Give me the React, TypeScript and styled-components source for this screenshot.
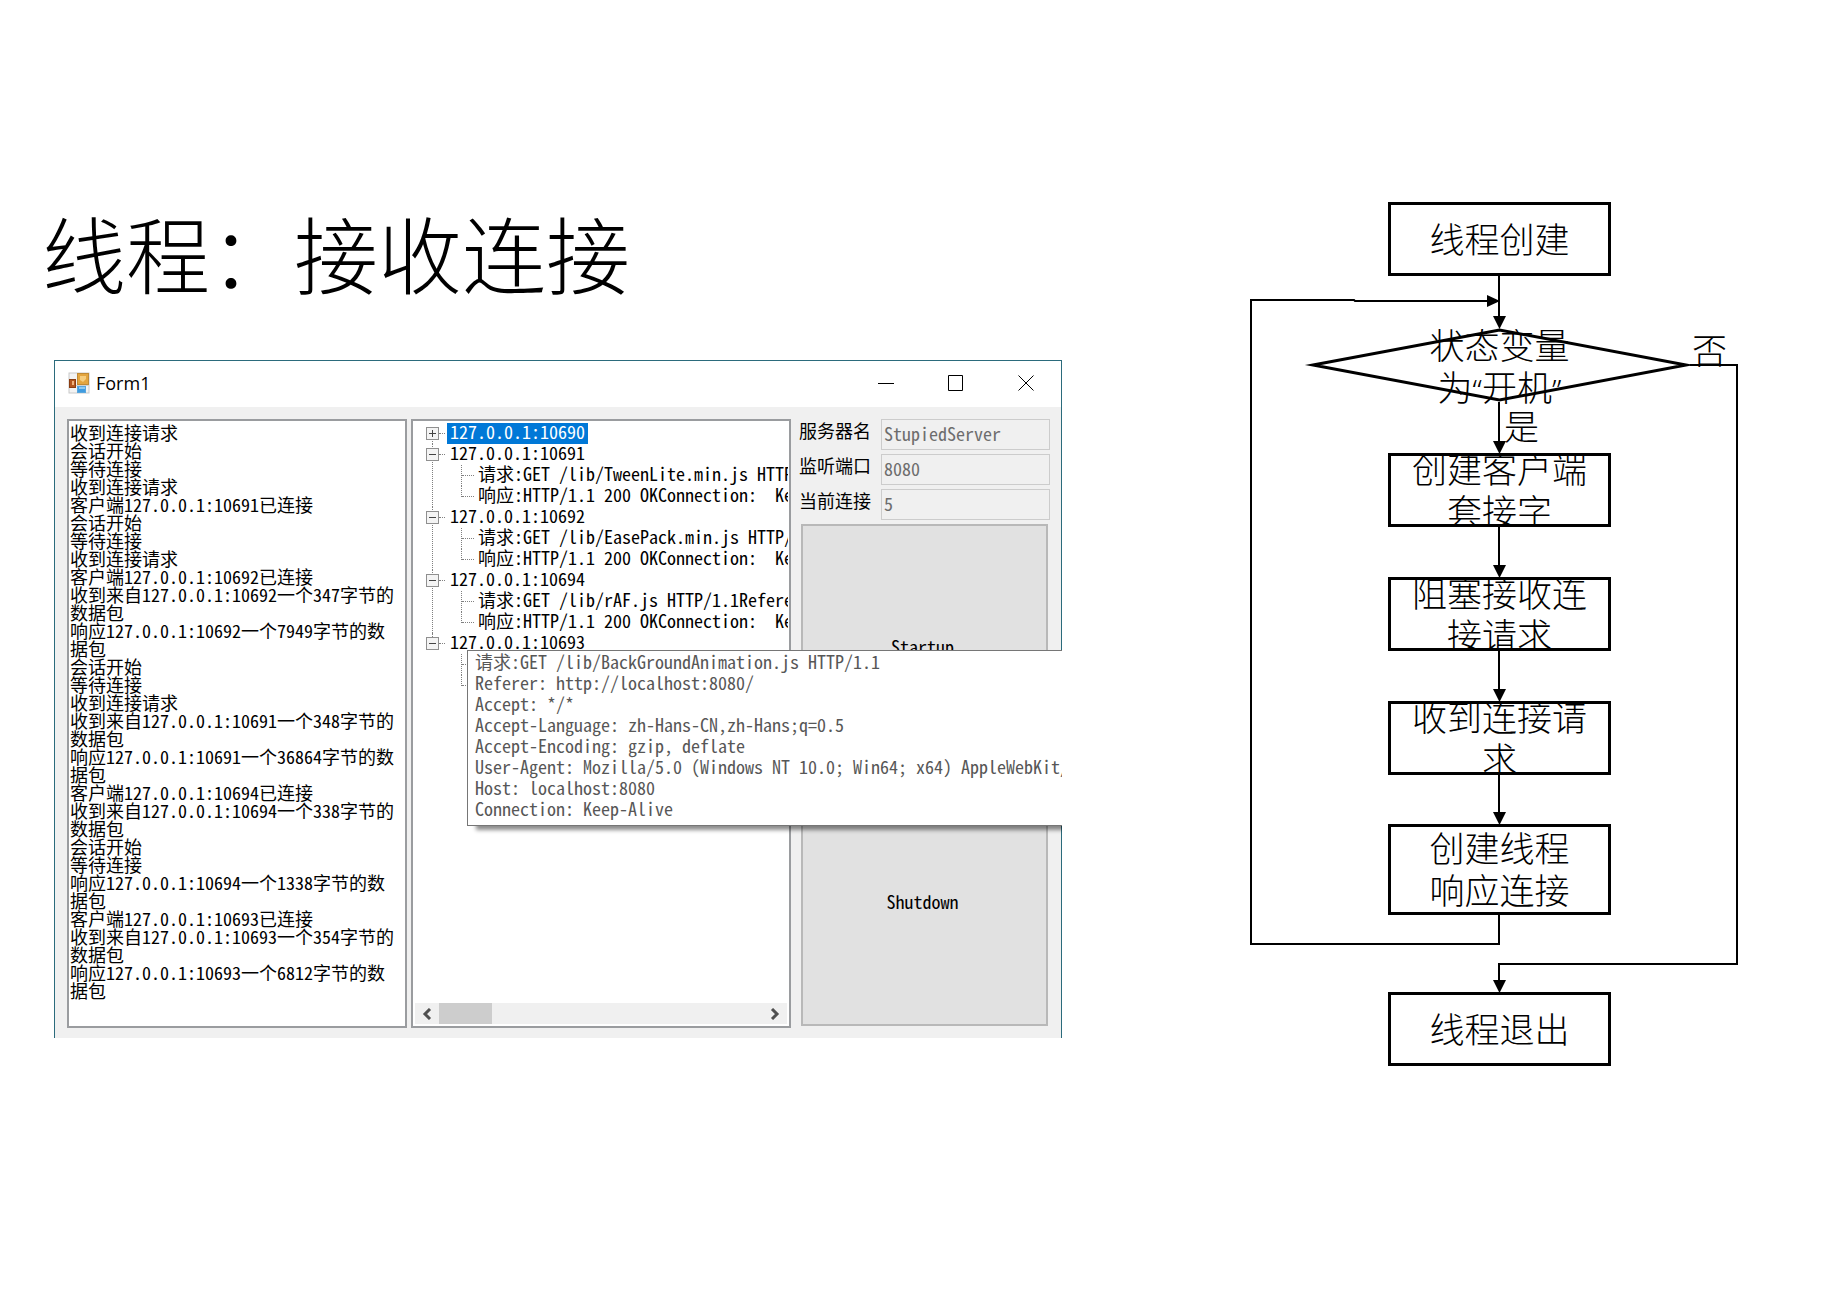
import React from "react";
import styled, { createGlobalStyle } from "styled-components";

const GlobalStyle = createGlobalStyle`
  *, *::before, *::after { box-sizing: border-box; }
  body {
    margin: 0;
    background: #fff;
    color: #000;
    font-family: "Noto Sans CJK SC", "Open Sans", sans-serif;
  }
  h1, p, ul { margin: 0; padding: 0; }
  ul { list-style: none; }
`;

/* ---------- slide ---------- */

const Slide = styled.main`
  display: grid;
  grid-template-columns: minmax(0, 1fr) 488px;
  gap: 188px;
  align-items: start;
  min-height: 100vh;
  padding: 202px 98px 0 42px;
`;

const Title = styled.h1`
  padding-bottom: 58px;
  font-size: 84px;
  font-weight: 200;
  line-height: 100px;
  white-space: nowrap;
`;

/* ---------- form window ---------- */

const Form = styled.section`
  margin-left: 12px;
  border: 1px solid #2b6b7c;
  border-bottom: 0;
  background: #f0f0f0;
  font-family: "Noto Sans Mono CJK SC", "Noto Sans CJK SC", monospace;
  font-size: 18px;
`;

const TitleBar = styled.header`
  display: flex;
  align-items: center;
  height: 46px;
  padding: 0 0 2px 13px;
  background: #fff;
`;

const Caption = styled.span`
  flex: 1;
  padding-left: 6px;
  font-family: "Open Sans", sans-serif;
  font-size: 18px;
  line-height: 24px;
`;

const CaptionButton = styled.button`
  display: grid;
  place-items: center;
  width: 70px;
  height: 44px;
  padding: 0;
  border: 0;
  background: none;
`;

const Body = styled.div`
  position: relative;
  display: grid;
  grid-template-columns: minmax(0, 340fr) minmax(0, 380fr) minmax(0, 255fr);
  gap: 4px;
  padding: 12px 11px 10px 12px;
`;

const Pane = styled.div`
  display: flex;
  flex-direction: column;
  min-height: 609px;
  border: 2px solid #9a9c9f;
  background: #fff;
  overflow: hidden;
`;

const Log = styled(Pane)`
  padding: 2px 6px 0 1px;
  line-height: 18px;
  word-break: break-all;
`;

/* ---------- tree ---------- */

const TreeList = styled.ul`
  flex: 1;
  padding-top: 2px;
  margin-right: 1px;
  line-height: 17px;
  white-space: pre;
  overflow: hidden;
`;

const Branch = styled.li`
  position: relative;
  &::before {
    content: "";
    position: absolute;
    left: 19px;
    top: 0;
    bottom: 0;
    border-left: 1px dotted #808080;
  }
  &:first-child::before { top: 10px; }
  &:last-child::before { bottom: auto; height: 10px; }
`;

const BranchRow = styled.div`
  display: flex;
  align-items: center;
  height: 21px;
  padding-left: 13px;
`;

const Expander = styled.button`
  position: relative;
  display: grid;
  place-items: center;
  width: 13px;
  height: 13px;
  padding: 0;
  border: 1px solid #8f8f8f;
  background: #f4f4f4;
`;

const Stub = styled.span`
  width: 6px;
  margin-right: 2px;
  border-top: 1px dotted #808080;
`;

const NodeLabel = styled.span<{ $selected?: boolean }>`
  height: 21px;
  padding: 0 3px;
  background: ${(p) => (p.$selected ? "#0078d7" : "transparent")};
  color: ${(p) => (p.$selected ? "#fff" : "#000")};
`;

const Leaf = styled.li`
  display: flex;
  height: 21px;
  padding-left: 48px;
`;

const Elbow = styled.span<{ $last: boolean }>`
  flex: none;
  width: 13px;
  height: ${(p) => (p.$last ? 11 : 21)}px;
  margin-right: 4px;
  border-left: 1px dotted #808080;
  &::before {
    content: "";
    display: block;
    height: 11px;
    border-bottom: 1px dotted #808080;
  }
`;

const ScrollBar = styled.div`
  display: flex;
  align-items: stretch;
  height: 21px;
  margin: 0 2px 2px;
  background: #f0f0f0;
`;

const ScrollButton = styled.button`
  display: grid;
  place-items: center;
  width: 24px;
  padding: 0;
  border: 0;
  background: none;
`;

const Track = styled.div`
  flex: 1;
`;

const Thumb = styled.div`
  width: 53px;
  height: 21px;
  background: #cdcdcd;
`;

/* ---------- settings column ---------- */

const Side = styled.div`
  display: flex;
  flex-direction: column;
  gap: 4px;
  padding-left: 4px;
`;

const Field = styled.div`
  display: grid;
  grid-template-columns: 82px minmax(0, 1fr);
  height: 31px;
`;

const FieldLabel = styled.label`
  line-height: 22px;
`;

const FieldInput = styled.input`
  width: 100%;
  min-width: 0;
  height: 31px;
  padding: 0 2px 4px;
  border: 1px solid #cccccc;
  border-radius: 0;
  background: #f0f0f0;
  color: #6d6d6d;
  font: inherit;
  line-height: 22px;
`;

const Actions = styled.div`
  display: flex;
  flex: 1;
  flex-direction: column;
  gap: 8px;
  padding: 0 2px;
  margin-bottom: 2px;
`;

const ActionButton = styled.button`
  flex: 1;
  padding: 0 4px 4px 0;
  border: 2px solid #b8b8b8;
  background: #e1e1e1;
  color: #000;
  font: inherit;
`;

const Tip = styled.div`
  position: absolute;
  top: 243px;
  left: 412px;
  right: -1px;
  padding: 0 0 6px 7px;
  border: 1px solid #767676;
  border-right: 0;
  background: #fff;
  color: #575757;
  line-height: 21px;
  white-space: pre;
  clip-path: inset(0 0 -12px 0);
  box-shadow: 8px 5px 4px -1px rgba(0, 0, 0, 0.45);
`;

/* ---------- flowchart ---------- */

const Chart = styled.section`
  position: relative;
  height: 864px;
  font-family: "Noto Sans CJK SC", sans-serif;
  font-size: 35px;
  font-weight: 300;
  line-height: 42px;
  text-align: center;
  white-space: pre;
`;

const Lines = styled.svg`
  position: absolute;
  inset: 0;
  overflow: visible;
`;

const Step = styled.div<{ $top: number; $height?: number; $plain?: boolean }>`
  position: absolute;
  top: ${(p) => p.$top}px;
  left: 138px;
  display: flex;
  align-items: center;
  justify-content: center;
  width: 223px;
  height: ${(p) => p.$height ?? 74}px;
  padding-bottom: 3px;
  border: ${(p) => (p.$plain ? "0" : "3px solid #000")};
  overflow: ${(p) => (p.$plain ? "visible" : "hidden")};
`;

const Quote = styled.span`
  font-family: "Noto Sans", sans-serif;
  font-size: 30px;
  line-height: 0;
`;

const Answer = styled.span<{ $left: number; $top: number }>`
  position: absolute;
  left: ${(p) => p.$left}px;
  top: ${(p) => p.$top}px;
`;

/* ---------- content ---------- */

const log = [
  "收到连接请求",
  "会话开始",
  "等待连接",
  "收到连接请求",
  "客户端127.0.0.1:10691已连接",
  "会话开始",
  "等待连接",
  "收到连接请求",
  "客户端127.0.0.1:10692已连接",
  "收到来自127.0.0.1:10692一个347字节的数据包",
  "响应127.0.0.1:10692一个7949字节的数据包",
  "会话开始",
  "等待连接",
  "收到连接请求",
  "收到来自127.0.0.1:10691一个348字节的数据包",
  "响应127.0.0.1:10691一个36864字节的数据包",
  "客户端127.0.0.1:10694已连接",
  "收到来自127.0.0.1:10694一个338字节的数据包",
  "会话开始",
  "等待连接",
  "响应127.0.0.1:10694一个1338字节的数据包",
  "客户端127.0.0.1:10693已连接",
  "收到来自127.0.0.1:10693一个354字节的数据包",
  "响应127.0.0.1:10693一个6812字节的数据包",
];

const reply = "响应:HTTP/1.1 200 OKConnection:  Keep";

const tree = [
  { name: "127.0.0.1:10690", selected: true, leaves: [] },
  { name: "127.0.0.1:10691", leaves: ["请求:GET /lib/TweenLite.min.js HTTP/1.1", reply] },
  { name: "127.0.0.1:10692", leaves: ["请求:GET /lib/EasePack.min.js HTTP/1.1", reply] },
  { name: "127.0.0.1:10694", leaves: ["请求:GET /lib/rAF.js HTTP/1.1Referer", reply] },
  { name: "127.0.0.1:10693", leaves: ["", ""] },
];

const fields = [
  { id: "server", label: "服务器名", value: "StupiedServer" },
  { id: "port", label: "监听端口", value: "8080" },
  { id: "count", label: "当前连接", value: "5" },
];

const request = [
  "请求:GET /lib/BackGroundAnimation.js HTTP/1.1",
  "Referer: http://localhost:8080/",
  "Accept: */*",
  "Accept-Language: zh-Hans-CN,zh-Hans;q=0.5",
  "Accept-Encoding: gzip, deflate",
  "User-Agent: Mozilla/5.0 (Windows NT 10.0; Win64; x64) AppleWebKit/",
  "Host: localhost:8080",
  "Connection: Keep-Alive",
];

const steps = [
  { top: 0, text: "线程创建" },
  { top: 251, text: "创建客户端\n套接字" },
  { top: 375, text: "阻塞接收连\n接请求" },
  { top: 499, text: "收到连接请\n求" },
  { top: 622, text: "创建线程\n响应连接", height: 91 },
  { top: 790, text: "线程退出" },
];

const arrowTips = [127, 252, 376, 500, 623, 791];

function FormIcon() {
  return (
    <svg width="22" height="22" viewBox="0 0 22 22" aria-hidden="true">
      <rect x="1" y="1" width="20" height="20" fill="#f3f3f3" stroke="#c9c9c9" />
      <path d="M9.500 1v20M1 13.500h20" stroke="#d2d2d2" />
      <rect x="9.500" y="1.500" width="11" height="11" fill="#e3a53f" stroke="#c08a35" />
      <path d="M12 4h6v3l-3 3-3-2z" fill="#f6cd7e" />
      <rect x="1.500" y="7.500" width="6" height="8" fill="#b4561f" stroke="#8a3d12" />
      <rect x="4" y="9" width="2" height="4" fill="#f0b27c" />
      <rect x="9.500" y="14.500" width="8" height="6" fill="#3f9be0" stroke="#58a6dc" />
      <path d="M11 15h6v2h-6z" fill="#8cc8f2" />
    </svg>
  );
}

export default function App() {
  return (
    <>
      <GlobalStyle />
      <Slide>
        <div>
          <Title>线程：接收连接</Title>
          <Form aria-label="Form1">
            <TitleBar>
              <FormIcon />
              <Caption>Form1</Caption>
              <CaptionButton aria-label="最小化">
                <svg width="16" height="16">
                  <path d="M0 8.500h16" stroke="#000" />
                </svg>
              </CaptionButton>
              <CaptionButton aria-label="最大化">
                <svg width="16" height="16">
                  <path d="M.5.5h14v15H.5z" fill="none" stroke="#000" />
                </svg>
              </CaptionButton>
              <CaptionButton aria-label="关闭">
                <svg width="16" height="16">
                  <path d="M.5.5l15 15M15.500.5l-15 15" stroke="#000" />
                </svg>
              </CaptionButton>
            </TitleBar>
            <Body>
              <Log role="log">
                {log.map((line, i) => (
                  <p key={i}>{line}</p>
                ))}
              </Log>
              <Pane>
                <TreeList>
                  {tree.map((node) => (
                    <Branch key={node.name}>
                      <BranchRow>
                        <Expander aria-label={node.selected ? "展开" : "折叠"}>
                          <svg width="9" height="9">
                            <path
                              d={node.selected ? "M1 4.500h7M4.500 1v7" : "M1 4.500h7"}
                              stroke="#444"
                            />
                          </svg>
                        </Expander>
                        <Stub />
                        <NodeLabel $selected={node.selected}>{node.name}</NodeLabel>
                      </BranchRow>
                      {node.leaves.length > 0 && (
                        <ul>
                          {node.leaves.map((leaf, i) => (
                            <Leaf key={i}>
                              <Elbow $last={i === node.leaves.length - 1} />
                              <span>{leaf}</span>
                            </Leaf>
                          ))}
                        </ul>
                      )}
                    </Branch>
                  ))}
                </TreeList>
                <ScrollBar>
                  <ScrollButton aria-label="向左滚动">
                    <svg width="10" height="12">
                      <path d="M8 1L3 6l5 5" fill="none" stroke="#505050" strokeWidth="3" />
                    </svg>
                  </ScrollButton>
                  <Track>
                    <Thumb />
                  </Track>
                  <ScrollButton aria-label="向右滚动">
                    <svg width="10" height="12">
                      <path d="M2 1l5 5-5 5" fill="none" stroke="#505050" strokeWidth="3" />
                    </svg>
                  </ScrollButton>
                </ScrollBar>
              </Pane>
              <Side>
                {fields.map((f) => (
                  <Field key={f.id}>
                    <FieldLabel htmlFor={f.id}>{f.label}</FieldLabel>
                    <FieldInput id={f.id} defaultValue={f.value} disabled />
                  </Field>
                ))}
                <Actions>
                  <ActionButton>Startup</ActionButton>
                  <ActionButton>Shutdown</ActionButton>
                </Actions>
              </Side>
              <Tip role="tooltip">
                {request.map((line) => (
                  <p key={line}>{line}</p>
                ))}
              </Tip>
            </Body>
          </Form>
        </div>

        <Chart aria-label="流程图">
          <Lines width="488" height="864" viewBox="0 0 488 864" aria-hidden="true">
            <g fill="none" stroke="#000" strokeWidth="2">
              <path d="M249 74v44M249 200v44M249 325v44M249 449v44M249 573v44" />
              <path d="M249 713v29H1V98h103l1 1h136" />
              <path d="M440 163h47v599H249v20" />
              <path d="M63 163l186.500-35L436 163l-186.500 35z" strokeWidth="3" strokeMiterlimit="10" />
            </g>
            {arrowTips.map((y) => (
              <path key={y} d={`M243 ${y - 13}h13l-6.500 13z`} />
            ))}
            <path d="M237 93v12l13-6z" />
          </Lines>
          {steps.map((s) => (
            <Step key={s.top} $top={s.top} $height={s.height}>
              {s.text}
            </Step>
          ))}
          <Step $top={127} $plain>
            <div>
              状态变量
              <br />
              为<Quote>“</Quote>开机<Quote>”</Quote>
            </div>
          </Step>
          <Answer $left={442} $top={126}>否</Answer>
          <Answer $left={254} $top={202}>是</Answer>
        </Chart>
      </Slide>
    </>
  );
}
